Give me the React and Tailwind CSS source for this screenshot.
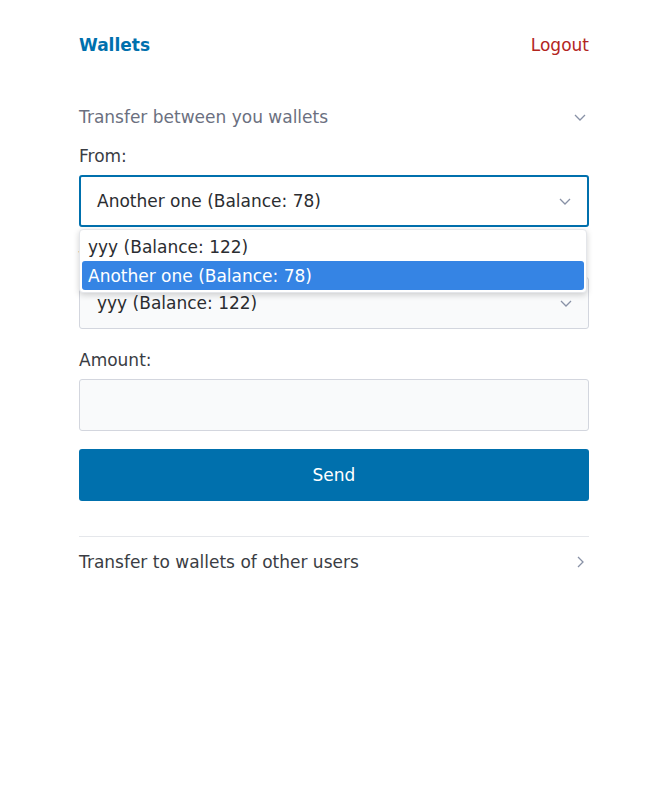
import React from 'react';

const ChevronDown = ({ className = '' }) => (
  <svg width="12" height="7" viewBox="0 0 12 7" fill="none" className={className}>
    <path d="M1 1l5 5 5-5" stroke="#8891a6" strokeWidth="1.3" />
  </svg>
);

const ChevronRight = () => (
  <svg width="7" height="12" viewBox="0 0 7 12" fill="none">
    <path d="M1 1l5 5-5 5" stroke="#8891a6" strokeWidth="1.3" />
  </svg>
);

const SelectBox = ({ value, focused }) => (
  <div
    className={
      'h-[52px] rounded-[3px] flex items-center justify-between pr-[16px] ' +
      (focused
        ? 'border-2 border-[#0070ad] bg-white pl-[16px]'
        : 'border border-[#d3d6de] bg-[#f9fafb] pl-[17px]')
    }
  >
    <span className="text-[#2b2d31]">{value}</span>
    <ChevronDown />
  </div>
);

const App = () => {
  return (
    <div
      className="min-h-[792px] bg-white text-[17px] leading-[26px]"
      style={{ fontFamily: '"DejaVu Sans", sans-serif' }}
    >
      <div className="w-[510px] mx-auto">
        <header className="flex items-center justify-between pt-[32px]">
          <span className="font-bold text-[#0070ad]">Wallets</span>
          <span className="text-[#b3261e]">Logout</span>
        </header>

        <section className="mt-[33px]">
          <div className="flex items-center justify-between py-[13px]">
            <span className="text-[#6b7080]">Transfer between you wallets</span>
            <ChevronDown className="mr-[3px]" />
          </div>

          <div className="pb-[35px]">
            <label className="block text-[#3a3d44] mb-[6px]">From:</label>
            <div className="relative">
              <SelectBox value="Another one (Balance: 78)" focused />
              <div className="absolute left-0 right-[2px] top-[54px] z-10 bg-white rounded-[4px] shadow-[0_2px_6px_rgba(0,0,0,0.18)] border border-[#e4e6ea] p-[2px]">
                <div className="h-[29px] flex items-center px-[6px] text-[#2b2d31]">
                  yyy (Balance: 122)
                </div>
                <div className="h-[29px] flex items-center px-[6px] bg-[#3584e4] text-white rounded-[3px]">
                  Another one (Balance: 78)
                </div>
              </div>
            </div>

            <label className="block text-[#3a3d44] mt-[18px] mb-[6px]">To:</label>
            <SelectBox value="yyy (Balance: 122)" />

            <label className="block text-[#3a3d44] mt-[18px] mb-[6px]">Amount:</label>
            <div className="h-[52px] rounded-[3px] border border-[#d3d6de] bg-[#f9fafb]" />

            <button className="mt-[18px] w-full h-[52px] rounded-[3px] bg-[#0070ad] text-white">
              Send
            </button>
          </div>
        </section>

        <section className="border-t border-[#e5e7eb]">
          <div className="flex items-center justify-between py-[12px]">
            <span className="text-[#3a3d44]">Transfer to wallets of other users</span>
            <span className="mr-[5px] flex"><ChevronRight /></span>
          </div>
        </section>
      </div>
    </div>
  );
};

export default App;
